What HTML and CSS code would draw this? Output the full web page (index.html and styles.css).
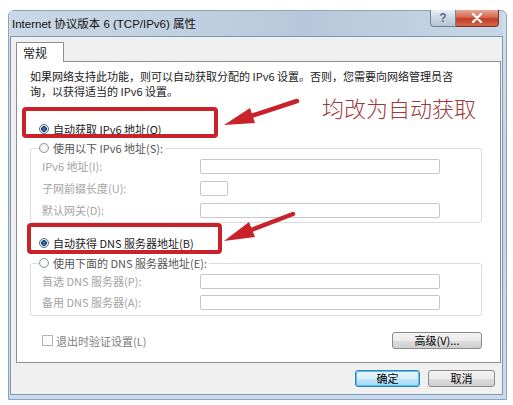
FILE: index.html
```html
<!DOCTYPE html>
<html lang="zh-CN">
<head>
    <meta charset="UTF-8">
    <meta name="viewport" content="width=device-width, initial-scale=1.0">
    <title>Internet 协议版本 6 (TCP/IPv6) 属性</title>
    <link rel="stylesheet" href="styles.css">
</head>
<body>
    <div class="window">
        <div class="titlebar">
            <span class="title">Internet 协议版本 6 (TCP/IPv6) 属性</span>
            <div class="caption-buttons">
                <button class="cap help">?</button>
                <button class="cap close">
                    <svg width="12" height="10" viewBox="0 0 12 10">
                        <path d="M2 1 L10 9 M10 1 L2 9" stroke="#ffffff" stroke-width="2.4" stroke-linecap="round"/>
                    </svg>
                </button>
            </div>
        </div>
        <div class="dialog">
            <div class="tabs">
                <div class="tab">常规</div>
            </div>
            <div class="panel">
                <p class="desc">如果网络支持此功能，则可以自动获取分配的 IPv6 设置。否则，您需要向网络管理员咨<br>询，以获得适当的 IPv6 设置。</p>

                <label class="option option-first"><span class="radio checked"></span>自动获取 IPv6 地址(O)</label>
                <fieldset class="group group-ip">
                    <legend class="option"><span class="radio"></span>使用以下 IPv6 地址(S):</legend>
                    <div class="field"><span class="field-label">IPv6 地址(I):</span><span class="input"></span></div>
                    <div class="field"><span class="field-label">子网前缀长度(U):</span><span class="input input-small"></span></div>
                    <div class="field"><span class="field-label">默认网关(D):</span><span class="input"></span></div>
                </fieldset>

                <label class="option option-dns"><span class="radio checked"></span>自动获得 DNS 服务器地址(B)</label>
                <fieldset class="group group-dns">
                    <legend class="option"><span class="radio"></span>使用下面的 DNS 服务器地址(E):</legend>
                    <div class="field"><span class="field-label">首选 DNS 服务器(P):</span><span class="input"></span></div>
                    <div class="field"><span class="field-label">备用 DNS 服务器(A):</span><span class="input"></span></div>
                </fieldset>

                <div class="panel-foot">
                    <label class="check"><span class="checkbox"></span>退出时验证设置(L)</label>
                    <button class="btn btn-adv">高级(V)...</button>
                </div>
            </div>
            <div class="actions">
                <button class="btn btn-default">确定</button>
                <button class="btn">取消</button>
            </div>
        </div>
    </div>

    <!-- red annotations drawn over the dialog -->
    <svg class="marks" width="513" height="405" viewBox="0 0 513 405">
        <rect x="24" y="109" width="192" height="27" rx="2" fill="none" stroke="#c8232b" stroke-width="4"/>
        <rect x="29" y="225" width="191" height="27" rx="2" fill="none" stroke="#c8232b" stroke-width="4"/>
        <path d="M297 101 L248 117" stroke="#c8232b" stroke-width="4.5" stroke-linecap="round"/>
        <path d="M224 125 L255 123 L250 108 Z" fill="#c8232b"/>
        <path d="M293 214 L246 232" stroke="#c8232b" stroke-width="4.5" stroke-linecap="round"/>
        <path d="M224 241 L255 237 L249 222 Z" fill="#c8232b"/>
    </svg>
    <div class="note">均改为自动获取</div>
</body>
</html>
```

FILE: styles.css
```css
body {
    margin: 0;
    background-color: #ffffff;
    font-family: 'Noto Sans CJK SC', sans-serif;
    font-size: 11px;
    color: #1a1a1a;
    position: relative;
    width: 513px;
    height: 405px;
    overflow: hidden;
}
.window {
    margin: 10px 0 0 8px;
    width: 499px;
    height: 390px;
    box-sizing: border-box;
    border: 1px solid #8ea3bc;
    border-radius: 6px 6px 0 0;
    padding: 0 3px 4px 1px;
    background: linear-gradient(to bottom, #d3dfec, #c4d6ea 40%, #c9dbee);
    display: flex;
    flex-direction: column;
}
.titlebar {
    height: 25px;
    display: flex;
    align-items: flex-start;
    background: linear-gradient(to right, #c9d7e6 0%, #c0cfe0 40%, #b7c8dc 60%, #c8d7e7 100%);
}
.title {
    padding: 5px 0 0 2px;
    line-height: 16px;
    font-family: 'Liberation Sans', 'Noto Sans CJK SC', sans-serif;
    font-size: 11.5px;
    color: #111111;
}
.caption-buttons {
    margin: -1px 4px 0 auto;
    display: flex;
}
.cap {
    height: 17px;
    border: 1px solid #6f819a;
    border-top: none;
    padding: 0;
    display: flex;
    justify-content: center;
    align-items: center;
}
.help {
    width: 26px;
    border-radius: 0 0 0 4px;
    background: linear-gradient(to bottom, #e9eff6, #cbd7e4 50%, #b5c5d7);
    font-family: 'Liberation Sans', sans-serif;
    font-size: 12px;
    font-weight: bold;
    color: #5d6f87;
}
.close {
    width: 43px;
    border-left: none;
    border-color: #7b3426;
    border-radius: 0 0 4px 0;
    background: linear-gradient(to bottom, #e9a899, #d4694f 45%, #c23e22 55%, #d1674c);
}
.dialog {
    flex: 1;
    background-color: #f0f0f0;
    border: 1px solid #7f95b0;
    padding: 5px 1px 7px 5px;
    display: flex;
    flex-direction: column;
}
.tabs {
    display: flex;
}
.tab {
    position: relative;
    z-index: 1;
    width: 40px;
    height: 19px;
    line-height: 19px;
    padding-left: 6px;
    margin-bottom: -1px;
    border: 1px solid #8c8f96;
    border-bottom: none;
    background-color: #ffffff;
    font-size: 12px;
}
.panel {
    border: 1px solid #8c8f96;
    background-color: #ffffff;
    padding: 7px 18px 13px 13px;
    display: flex;
    flex-direction: column;
}
.desc {
    margin: 0;
    line-height: 15px;
    white-space: nowrap;
}
.option {
    display: flex;
    align-items: center;
    height: 16px;
    white-space: nowrap;
}
.option-first {
    margin: 22px 0 0 9px;
}
.option-dns {
    margin: 12px 0 0 9px;
}
.radio {
    width: 8px;
    height: 8px;
    border: 1px solid #8f959c;
    border-radius: 50%;
    margin-right: 4px;
    background: radial-gradient(circle, #ffffff 0%, #e8ebef 100%);
    flex-shrink: 0;
}
.radio.checked {
    border-color: #5d6e80;
    background: radial-gradient(circle, #4b87c4 0%, #1b3f6e 45%, #e6edf4 55%, #f6f8fa 100%);
}
.group {
    min-width: 0;
    margin: 0;
    border: 1px solid #dcdcdc;
    border-radius: 3px;
    padding: 2px 0 4px 0;
}
.group-ip {
    margin-top: 3px;
}
.group-dns {
    margin-top: 4px;
    padding-bottom: 5px;
}
.group legend {
    margin-left: 8px;
    padding: 0 2px 0 0;
    color: #555555;
}
.field {
    display: flex;
    align-items: center;
    height: 16px;
    padding-left: 11px;
    color: #a3a3a3;
}
.group-ip .field + .field {
    margin-top: 6px;
}
.group-dns .field + .field {
    margin-top: 5px;
}
.field-label {
    width: 158px;
    white-space: nowrap;
}
.input {
    width: 240px;
    height: 15px;
    box-sizing: border-box;
    border: 1px solid #c6c6c6;
    border-radius: 2px;
    background-color: #ffffff;
}
.input-small {
    width: 28px;
}
.panel-foot {
    margin-top: 16px;
    height: 17px;
    display: flex;
    justify-content: space-between;
    align-items: center;
}
.check {
    display: flex;
    align-items: center;
    margin-left: 12px;
    color: #808080;
}
.checkbox {
    width: 9px;
    height: 9px;
    border: 1px solid #b3b3b3;
    background-color: #fbfbfb;
    margin-right: 3px;
}
.btn {
    height: 17px;
    padding: 0;
    border: 1px solid #8a8a8a;
    border-radius: 3px;
    background: linear-gradient(to bottom, #f4f4f4, #ebebeb 50%, #dddddd 51%, #cfcfcf);
    font-family: 'Noto Sans CJK SC', sans-serif;
    font-size: 11px;
    line-height: 15px;
    color: #000000;
}
.btn-adv {
    width: 90px;
}
.actions {
    margin: 7px 6px 0 0;
    display: flex;
    justify-content: flex-end;
    gap: 8px;
}
.actions .btn {
    width: 67px;
}
.actions .btn-default {
    width: 65px;
    border-color: #3c7fb1;
    background: linear-gradient(to bottom, #eaf6fd, #d9f0fc 50%, #bee6fd 51%, #a7d9f5);
    box-shadow: inset 0 0 0 1px #48c4f6;
}
.marks {
    position: absolute;
    left: 0;
    top: 0;
    pointer-events: none;
}
.note {
    position: absolute;
    left: 322px;
    top: 94px;
    font-size: 22px;
    font-weight: 300;
    line-height: 26px;
    color: #9e3a3a;
    white-space: nowrap;
}
```
